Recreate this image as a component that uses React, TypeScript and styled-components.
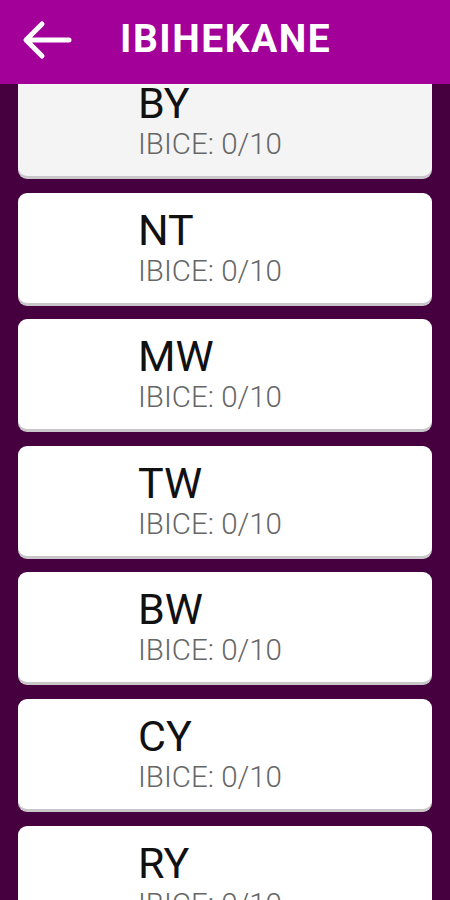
import React from "react";
import styled, { createGlobalStyle } from "styled-components";

const items = ["BY", "NT", "MW", "TW", "BW", "CY", "RY", "KG"];

const GlobalStyle = createGlobalStyle`
  html, body {
    margin: 0;
    padding: 0;
    background: #46003f;
    font-family: Roboto, "Liberation Sans", sans-serif;
  }
`;

const Screen = styled.div`
  width: 450px;
  height: 900px;
  display: flex;
  flex-direction: column;
  background: #46003f;
  overflow: hidden;
`;

const Header = styled.div`
  height: 84px;
  flex-shrink: 0;
  display: flex;
  align-items: center;
  background: #a3009a;
  position: relative;
  z-index: 2;
`;

const BackButton = styled.div`
  width: 120px;
  height: 84px;
  display: flex;
  align-items: center;
  padding-left: 22px;
  padding-bottom: 4px;
  box-sizing: border-box;
`;

const Title = styled.h1`
  margin: 0 0 6px 0;
  color: #ffffff;
  font-size: 39px;
  line-height: 44px;
  font-weight: 700;
  letter-spacing: 1.5px;
`;

const Scroller = styled.div`
  flex: 1;
  overflow: hidden;
`;

const List = styled.div`
  display: flex;
  flex-direction: column;
  gap: 16.6px;
  padding: 0 18px;
  margin-top: -18px;
`;

const Card = styled.div<{ $pressed?: boolean }>`
  height: 110px;
  box-sizing: border-box;
  border-radius: 9px;
  background: ${(p) => (p.$pressed ? "#f4f4f4" : "#ffffff")};
  box-shadow: 0 3px 0 #c9c6c9;
  display: flex;
  flex-direction: column;
  padding: 14px 0 0 120px;
`;

const Code = styled.div`
  font-size: 43px;
  line-height: 46px;
  color: #111111;
  font-weight: 400;
`;

const Score = styled.div`
  margin-top: 2px;
  font-size: 29.5px;
  line-height: 32px;
  color: #666666;
  font-weight: 300;
`;

export default function App() {
  return (
    <>
      <GlobalStyle />
      <Screen>
        <Header>
          <BackButton>
            <svg width="50" height="40" viewBox="0 0 50 40">
              <path
                d="M47 20 H5 M20 4 L4 20 L20 36"
                stroke="#ffffff"
                strokeWidth="5"
                fill="none"
                strokeLinecap="round"
                strokeLinejoin="round"
              />
            </svg>
          </BackButton>
          <Title>IBIHEKANE</Title>
        </Header>
        <Scroller>
          <List>
            {items.map((code, i) => (
              <Card key={code} $pressed={i === 0}>
                <Code>{code}</Code>
                <Score>IBICE: 0/10</Score>
              </Card>
            ))}
          </List>
        </Scroller>
      </Screen>
    </>
  );
}
